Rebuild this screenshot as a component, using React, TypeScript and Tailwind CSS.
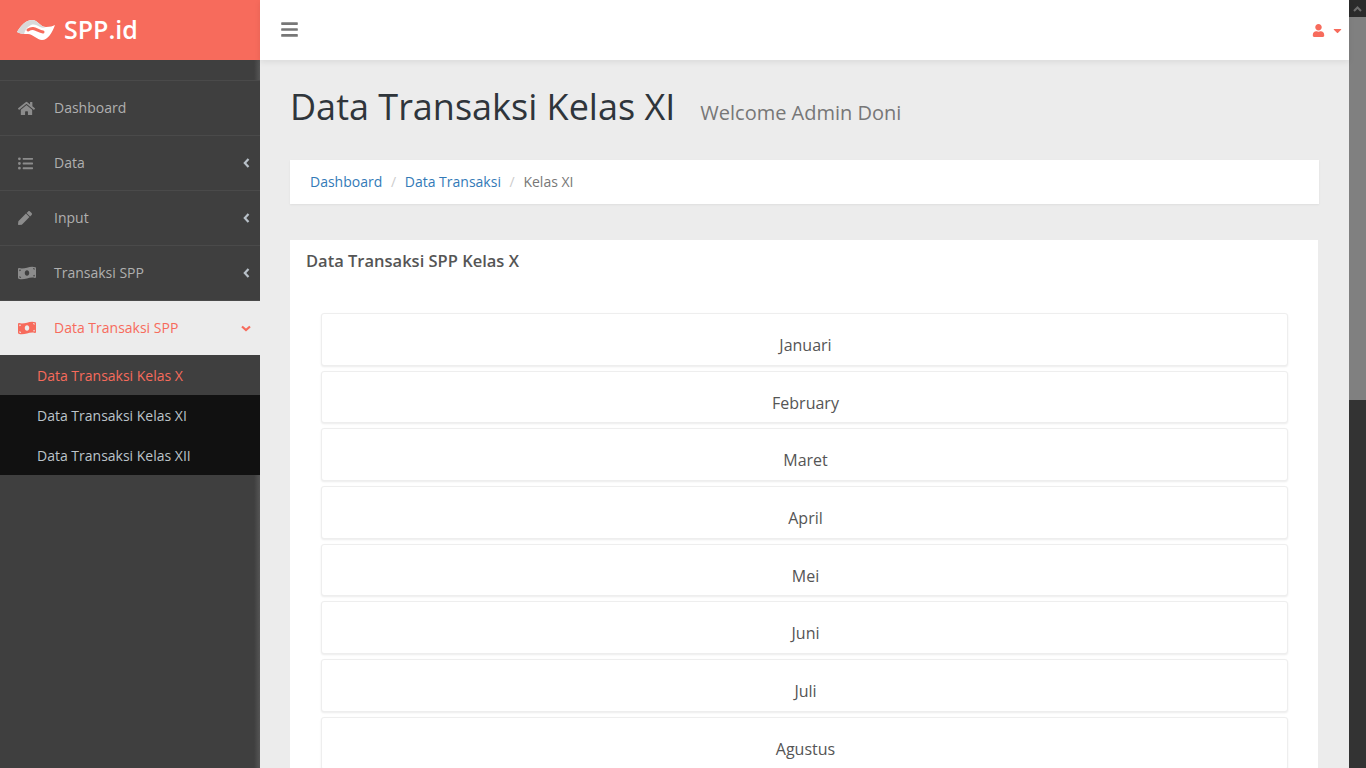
import { FaHome, FaListUl, FaPen, FaMoneyBillWave, FaBars, FaUser, FaCaretDown } from "react-icons/fa";

const menuItems = [
  { label: "Dashboard", icon: <FaHome size={17} />, arrow: false },
  { label: "Data", icon: <FaListUl size={15} />, arrow: true },
  { label: "Input", icon: <FaPen size={14} />, arrow: true },
  { label: "Transaksi SPP", icon: <FaMoneyBillWave size={18} />, arrow: true },
];

const months = ["Januari", "February", "Maret", "April", "Mei", "Juni", "Juli", "Agustus"];

function Logo() {
  return (
    <svg width="40" height="22" viewBox="0 0 40 22" className="shrink-0">
      <path d="M1 13 C5 6 10 1 16 1 C22 1 24 8 30 8 C34 8 37 7 39 6 C36 14 32 21 26 21 C21 21 17 15 12 15 C8 15 5 15 1 13 Z" fill="#ffffff" />
      <path d="M1 13 C5 6 10 1 16 1 C22 1 24 8 30 8 C28 9 26 9 24 8 C21 6 18 5 15 6 C11 8 9 11 8 15 C6 15 3 14 1 13 Z" fill="#d9d9d9" />
      <path d="M12 11 C18 7 21 12 27 13" fill="none" stroke="#f76b5c" strokeWidth="3" strokeLinecap="round" />
    </svg>
  );
}

function ArrowLeft() {
  return (
    <svg width="7" height="10" viewBox="0 0 7 10" className="mr-[10px] text-[#b8c0c8]">
      <path d="M5.5 1 L1.8 5 L5.5 9" fill="none" stroke="currentColor" strokeWidth="2.2" />
    </svg>
  );
}

function ArrowDown() {
  return (
    <svg width="10" height="7" viewBox="0 0 10 7" className="mr-[9px]">
      <path d="M1 1.5 L5 5 L9 1.5" fill="none" stroke="currentColor" strokeWidth="2.2" />
    </svg>
  );
}

function SidebarFade() {
  return <div className="w-[6px] h-full bg-gradient-to-r from-[#3f3f3f] to-[#555555]" />;
}

function Sidebar() {
  return (
    <aside className="w-[260px] shrink-0 h-full flex flex-col bg-[#3f3f3f] font-['Open_Sans',sans-serif] text-sm">
      <div className="h-[60px] shrink-0 bg-[#f76b5c] flex items-center pl-4 gap-[8px]">
        <Logo />
        <span className="text-white text-[25px] font-semibold">SPP.id</span>
      </div>
      <div className="h-[21px] shrink-0 flex justify-end border-b border-[#4a4a4a]">
        <SidebarFade />
      </div>
      {menuItems.map((item) => (
        <div key={item.label} className="h-[55px] shrink-0 flex items-center border-b border-[#4a4a4a] text-[#b0b0b0]">
          <span className="w-[54px] pl-[18px] text-[#8c8c8c]">{item.icon}</span>
          <span className="flex-1">{item.label}</span>
          {item.arrow && <ArrowLeft />}
        </div>
      ))}
      <div className="h-[54px] shrink-0 flex items-center bg-[#ececec] text-[#f76b5c]">
        <span className="w-[54px] pl-[18px]"><FaMoneyBillWave size={18} /></span>
        <span className="flex-1">Data Transaksi SPP</span>
        <ArrowDown />
      </div>
      <div className="h-10 shrink-0 flex items-center pl-[37px] pt-[2px] text-[#f76b5c]">Data Transaksi Kelas X</div>
      <div className="h-10 shrink-0 flex items-center pl-[37px] pt-[2px] bg-[#111111] text-[#bcc4ca]">Data Transaksi Kelas XI</div>
      <div className="h-10 shrink-0 flex items-center pl-[37px] pt-[2px] bg-[#111111] text-[#bcc4ca]">Data Transaksi Kelas XII</div>
      <div className="flex-1 flex justify-end">
        <SidebarFade />
      </div>
    </aside>
  );
}

function Topbar() {
  return (
    <header className="h-[60px] shrink-0 bg-white flex items-center justify-between pl-5 pr-[5px] shadow-[0_2px_6px_rgba(0,0,0,0.08)] relative">
      <FaBars size={19} className="text-[#777777] mb-px" />
      <div className="flex items-center gap-[6px] text-[#f76b5c]">
        <FaUser size={13} />
        <FaCaretDown size={13} />
      </div>
    </header>
  );
}

function Content() {
  return (
    <div className="flex-1 overflow-hidden pl-[30px] pr-[30px] font-['Open_Sans',sans-serif]">
      <div className="flex items-baseline gap-[25px] pt-[23px] h-[100px]">
        <h1 className="text-[36px] leading-[48px] text-[#2f353b]">Data Transaksi Kelas XI</h1>
        <span className="text-xl text-[#777777]">Welcome Admin Doni</span>
      </div>
      <nav className="h-11 bg-white flex items-center px-5 text-sm shadow-[0_1px_2px_rgba(0,0,0,0.06)]">
        <a className="text-[#337ab7]">Dashboard</a>
        <span className="px-[8.7px] text-[#cccccc]">/</span>
        <a className="text-[#337ab7]">Data Transaksi</a>
        <span className="px-[8.7px] text-[#cccccc]">/</span>
        <span className="text-[#777777]">Kelas XI</span>
      </nav>
      <section className="mt-9 mr-px bg-white pt-[10px] pb-5 h-[600px]">
        <h2 className="pl-4 text-[16.5px] font-semibold text-[#555555] leading-[22px]">Data Transaksi SPP Kelas X</h2>
        <div className="mt-[41px] ml-[31px] mr-[30px] flex flex-col gap-[5px]">
          {months.map((month) => (
            <div key={month} className="h-[52.7px] shrink-0 rounded-[3px] bg-white border border-[#eeeeee] shadow-[0_1px_2px_rgba(0,0,0,0.08)] pl-[2px] pt-[20px] text-center text-base leading-[22px] text-[#555555]">
              {month}
            </div>
          ))}
        </div>
      </section>
    </div>
  );
}

function Scrollbar() {
  return (
    <div className="w-[17px] shrink-0 h-full flex flex-col bg-[#333333]">
      <div className="h-[17px] bg-[#2b2b2b] flex items-center justify-center">
        <svg width="9" height="6" viewBox="0 0 9 6">
          <path d="M1 5 L4.5 1.5 L8 5" fill="none" stroke="#6e6e6e" strokeWidth="2" />
        </svg>
      </div>
      <div className="h-[383px] bg-[#808080]" />
    </div>
  );
}

export default function App() {
  return (
    <div className="h-screen w-full flex overflow-hidden bg-[#ececec]">
      <Sidebar />
      <main className="flex-1 min-w-0 flex flex-col h-full">
        <Topbar />
        <Content />
      </main>
      <Scrollbar />
    </div>
  );
}
